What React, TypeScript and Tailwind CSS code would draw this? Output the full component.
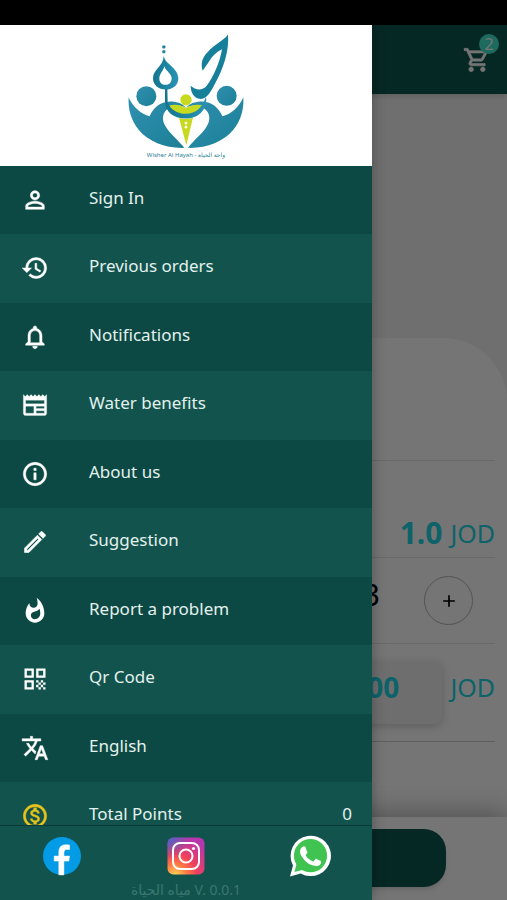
import React from 'react'
import {
  MdPersonOutline,
  MdHistory,
  MdNotificationsNone,
  MdOutlineNewspaper,
  MdInfoOutline,
  MdOutlineEdit,
  MdWhatshot,
  MdOutlineQrCode,
  MdTranslate,
  MdOutlineMonetizationOn,
  MdOutlineShoppingCart,
  MdAdd,
} from 'react-icons/md'
import type { IconType } from 'react-icons'

interface MenuItem {
  label: string
  icon: IconType
  value?: string
  iconClass?: string
  stroke?: number
}

const menuItems: MenuItem[] = [
  { label: 'Sign In', icon: MdPersonOutline },
  { label: 'Previous orders', icon: MdHistory },
  { label: 'Notifications', icon: MdNotificationsNone },
  { label: 'Water benefits', icon: MdOutlineNewspaper, stroke: 0.2 },
  { label: 'About us', icon: MdInfoOutline },
  { label: 'Suggestion', icon: MdOutlineEdit, stroke: 0.5 },
  { label: 'Report a problem', icon: MdWhatshot, stroke: 0 },
  { label: 'Qr Code', icon: MdOutlineQrCode, stroke: 0 },
  { label: 'English', icon: MdTranslate },
  { label: 'Total Points', icon: MdOutlineMonetizationOn, value: '0', iconClass: 'text-[#e8c31c]' },
]

const Logo: React.FC = () => (
  <svg viewBox="50 35 360 350" className="h-[117px] w-[120px]" aria-hidden="true">
    <defs>
      <linearGradient id="body" x1="0" y1="0" x2="1" y2="1">
        <stop offset="0" stopColor="#2f8fb0" />
        <stop offset="1" stopColor="#1c8096" />
      </linearGradient>
      <linearGradient id="drop" x1="0" y1="0" x2="1" y2="0">
        <stop offset="0" stopColor="#12758f" />
        <stop offset="1" stopColor="#2a93b5" />
      </linearGradient>
    </defs>
    {/* people */}
    <circle cx="111" cy="227" r="30" fill="url(#body)" />
    <circle cx="352" cy="226" r="30" fill="url(#body)" />
    <path d="M58 231C70 258 96 282 121 287C131 262 153 244 182 243C204 243 221 250 229 261C215 253 195 254 180 262C158 274 156 300 169 318C184 342 207 359 225 382C171 384 118 365 88 328C64 298 56 264 58 231Z" fill="url(#body)" />
    <path d="M402 230C390 258 364 282 339 287C329 262 307 244 279 243C256 243 240 250 231 261C246 253 266 254 281 262C303 274 305 300 292 318C277 342 253 359 236 382C289 384 342 365 372 328C396 298 404 264 402 230Z" fill="url(#body)" />
    {/* torch */}
    <circle cx="230" cy="238" r="17" fill="#c8da20" />
    <path d="M178 256C195 251 211 252 230 262C249 252 263 251 280 254C267 276 250 284 229 284C207 284 190 276 178 256Z" fill="#c8da20" />
    <path d="M209 292Q230 299 251 292L231 374Z" fill="#c8da20" />
    <circle cx="230" cy="308" r="4" fill="#fff" />
    <circle cx="230" cy="320" r="4" fill="#fff" />
    {/* bowl and drop */}
    <path d="M167 203L174 203L175 245C184 269 207 280 230 280C260 280 279 261 290 229C295 261 274 292 235 294C198 296 168 278 167 243Z" fill="url(#drop)" />
    <path fillRule="evenodd" d="M163 106C166 130 206 142 207 173C207 194 190 207 169 207C148 207 131 193 131 173C131 147 162 139 163 106ZM165 137C162 151 150 159 150 174C150 186 158 193 168 193C179 193 187 186 187 173C187 159 169 151 165 137Z" fill="url(#drop)" />
    <rect x="159" y="75" width="9" height="9" rx="2" fill="#1c7f9b" />
    <rect x="159" y="89" width="9" height="9" rx="2" fill="#1c7f9b" />
    {/* letter stroke */}
    <path d="M356 41C360 91 343 143 313 197C300 222 288 237 270 235C253 233 244 215 244 196C259 210 279 212 292 196C311 170 331 128 338 86C321 94 309 107 301 120C293 132 286 142 280 151C276 135 276 122 284 109C296 88 323 70 338 59C346 53 352 48 356 41Z" fill="#16809a" />
  </svg>
)

const FacebookIcon: React.FC = () => (
  <svg viewBox="0 0 40 40" className="size-10" aria-hidden="true">
    <circle cx="20" cy="20" r="19" fill="#039be5" />
    <path d="M21.9 25.1H26.8L27.6 20.1H21.9V17.4C21.9 15.3 22.6 13.5 24.5 13.5H27.6V9.1C27.1 9 25.9 8.8 23.9 8.8C19.4 8.8 16.8 11.1 16.8 16.5V20.1H12.2V25.1H16.8V38.7C17.7 38.9 18.7 39 19.6 39C20.4 39 21.2 38.9 21.9 38.8Z" fill="#fff" stroke="#fff" strokeWidth="0.5" />
  </svg>
)

const InstagramIcon: React.FC = () => (
  <svg viewBox="0 0 40 40" className="size-10" aria-hidden="true">
    <defs>
      <radialGradient id="igWarm" cx="9" cy="40" r="40" gradientUnits="userSpaceOnUse">
        <stop offset="0" stopColor="#ffdd55" />
        <stop offset="0.3" stopColor="#ff7a45" />
        <stop offset="0.55" stopColor="#f0405c" />
        <stop offset="1" stopColor="#b735ad" />
      </radialGradient>
      <radialGradient id="igCool" cx="2" cy="1" r="22" gradientUnits="userSpaceOnUse">
        <stop offset="0" stopColor="#4168c9" />
        <stop offset="1" stopColor="#4168c9" stopOpacity="0" />
      </radialGradient>
    </defs>
    <rect x="1.500" y="1.500" width="37" height="37" rx="6" fill="url(#igWarm)" />
    <rect x="1.500" y="1.500" width="37" height="37" rx="6" fill="url(#igCool)" />
    <rect x="7" y="7" width="26" height="26" rx="7" fill="none" stroke="#fff" strokeWidth="2" />
    <circle cx="20" cy="20" r="6.500" fill="none" stroke="#fff" strokeWidth="2" />
    <circle cx="27.500" cy="12.500" r="1.600" fill="#fff" />
  </svg>
)

const WhatsappIcon: React.FC = () => (
  <svg viewBox="0 0 42 42" className="size-[42px]" aria-hidden="true">
    <path d="M1 41.500L4 30.500A20.200 20.200 0 1 1 11.700 38.400Z" fill="#fff" />
    <circle cx="21.500" cy="20.700" r="16.600" fill="#40c351" />
    <path d="M5.500 37L7.800 28L14 34.700Z" fill="#40c351" />
    <path d="M16.600 12.400C16.200 11.600 15.800 11.600 15.400 11.600H14.400C14 11.600 13.400 11.700 12.900 12.300C12.400 12.900 11 14.200 11 16.700C11 19.200 12.900 21.700 13.100 22C13.400 22.400 16.700 27.700 22 29.800C26.400 31.500 27.300 31.200 28.200 31.100C29.200 31 31.300 29.900 31.700 28.700C32.100 27.500 32.100 26.400 32 26.200C31.800 26 31.400 25.800 30.900 25.600C30.400 25.300 28 24.100 27.500 24C27 23.800 26.700 23.700 26.300 24.200C26 24.700 25 25.800 24.700 26.200C24.400 26.500 24.100 26.600 23.600 26.300C23.100 26.100 21.500 25.500 19.600 23.800C18.100 22.500 17.100 20.900 16.800 20.400C16.500 19.900 16.800 19.600 17 19.400C17.200 19.200 17.500 18.800 17.800 18.500C18 18.200 18.100 18 18.300 17.700C18.400 17.300 18.400 17 18.200 16.800C18.100 16.500 17.100 14 16.600 12.400Z" fill="#fff" />
  </svg>
)

const ProductPage: React.FC = () => (
  <div className="flex min-h-screen flex-col bg-[#f2f2f2]">
    <div className="h-[25px] bg-black" />
    <header className="flex h-[69px] items-center justify-end bg-[#0f5850] pr-4 shadow-md">
      <button type="button" aria-label="Cart" className="relative text-white">
        <MdOutlineShoppingCart strokeWidth={0.5} className="size-7 [&_path[fill=none]]:stroke-none" />
        <span className="absolute -top-3 -right-2 flex size-5 items-center justify-center rounded-full bg-[#3fe6cc] text-base leading-5">
          2
        </span>
      </button>
    </header>

    <main className="flex flex-1 flex-col pt-[244px]">
      <section className="flex-1 rounded-tr-[64px] bg-[#fefefe] pt-[122px] pr-3">
        <div className="flex h-[98px] items-end justify-end gap-2 border-y border-[#e4e4e4] pb-1 text-[#20d8e6]">
          <span className="text-[30px] leading-10 font-bold">1.0</span>
          <span className="text-[25px] leading-10">JOD</span>
        </div>
        <div className="flex h-[86px] items-center justify-end gap-11 border-b border-[#e4e4e4] pr-[22px]">
          <span className="pb-3 text-[30px] leading-10 text-black">3</span>
          <button
            type="button"
            aria-label="Increase quantity"
            className="flex size-[49px] items-center justify-center rounded-full border border-[#b4b4b4] text-black"
          >
            <MdAdd className="size-5" />
          </button>
        </div>
        <div className="flex h-[98px] items-center justify-end gap-2 border-b border-[#cccccc] text-[#20d8e6]">
          <input
            type="text"
            aria-label="Total price"
            defaultValue="3.00"
            className="h-[62px] w-[142px] rounded-lg bg-[#f0f0f0] pb-3 text-center text-[28px] font-bold shadow-[0_2px_10px_rgba(0,0,0,0.2)]"
          />
          <span className="pb-3 text-[25px] leading-10">JOD</span>
        </div>
      </section>
    </main>

    <footer className="h-[83px] bg-white px-[61px] pt-3 shadow-[0_-4px_24px_rgba(0,0,0,0.3)]">
      <button type="button" aria-label="Add to cart" className="h-[58px] w-full rounded-[22px] bg-[#0f5850] shadow-md" />
    </footer>
  </div>
)

const Drawer: React.FC = () => (
  <aside className="absolute top-[25px] bottom-0 left-0 flex w-[372px] max-w-[85%] flex-col bg-[#12544d] shadow-[0_0_12px_rgba(0,0,0,0.3)]">
    <div className="flex h-[141px] shrink-0 flex-col items-center bg-white pt-[7px]">
      <Logo />
      <p className="text-[6px] leading-3 text-[#2b7f97]">Wisher Al Hayah - واحة الحياة</p>
    </div>

    <nav className="min-h-0 flex-1 overflow-hidden">
      <ul>
        {menuItems.map(({ label, icon: Icon, value, iconClass, stroke }) => (
          <li key={label} className="h-[68px] odd:bg-[#0d4944] even:h-[69px] even:bg-[#12544d] even:pb-px">
            <a href="#" className="flex h-full items-center pr-5 pl-[21px] text-[#e3f1ee]">
              <Icon
                strokeWidth={stroke ?? 0.4}
                className={`size-7 shrink-0 [&_path[fill=none]]:stroke-none ${iconClass ?? 'text-white'}`}
              />
              <span className="flex-1 pb-1 pl-10 text-[17px] leading-5">{label}</span>
              {value && <span className="pb-1 text-[17px] leading-5">{value}</span>}
            </a>
          </li>
        ))}
      </ul>
    </nav>

    <div className="h-[75px] shrink-0 border-t border-[#0a3a35] pt-[9px]">
      <div className="grid h-10 grid-cols-3 place-items-center">
        <a href="#" aria-label="Facebook"><FacebookIcon /></a>
        <a href="#" aria-label="Instagram"><InstagramIcon /></a>
        <a href="#" aria-label="WhatsApp"><WhatsappIcon /></a>
      </div>
      <p className="pt-[5px] text-center text-sm text-[#3b7670]">مياه الحياة V. 0.0.1</p>
    </div>
  </aside>
)

const App: React.FC = () => {
  return (
    <div className="relative min-h-screen overflow-hidden font-['Noto_Sans','DejaVu_Sans',sans-serif]">
      <ProductPage />
      <div className="absolute inset-0 bg-black/54" />
      <Drawer />
    </div>
  )
}

export default App
